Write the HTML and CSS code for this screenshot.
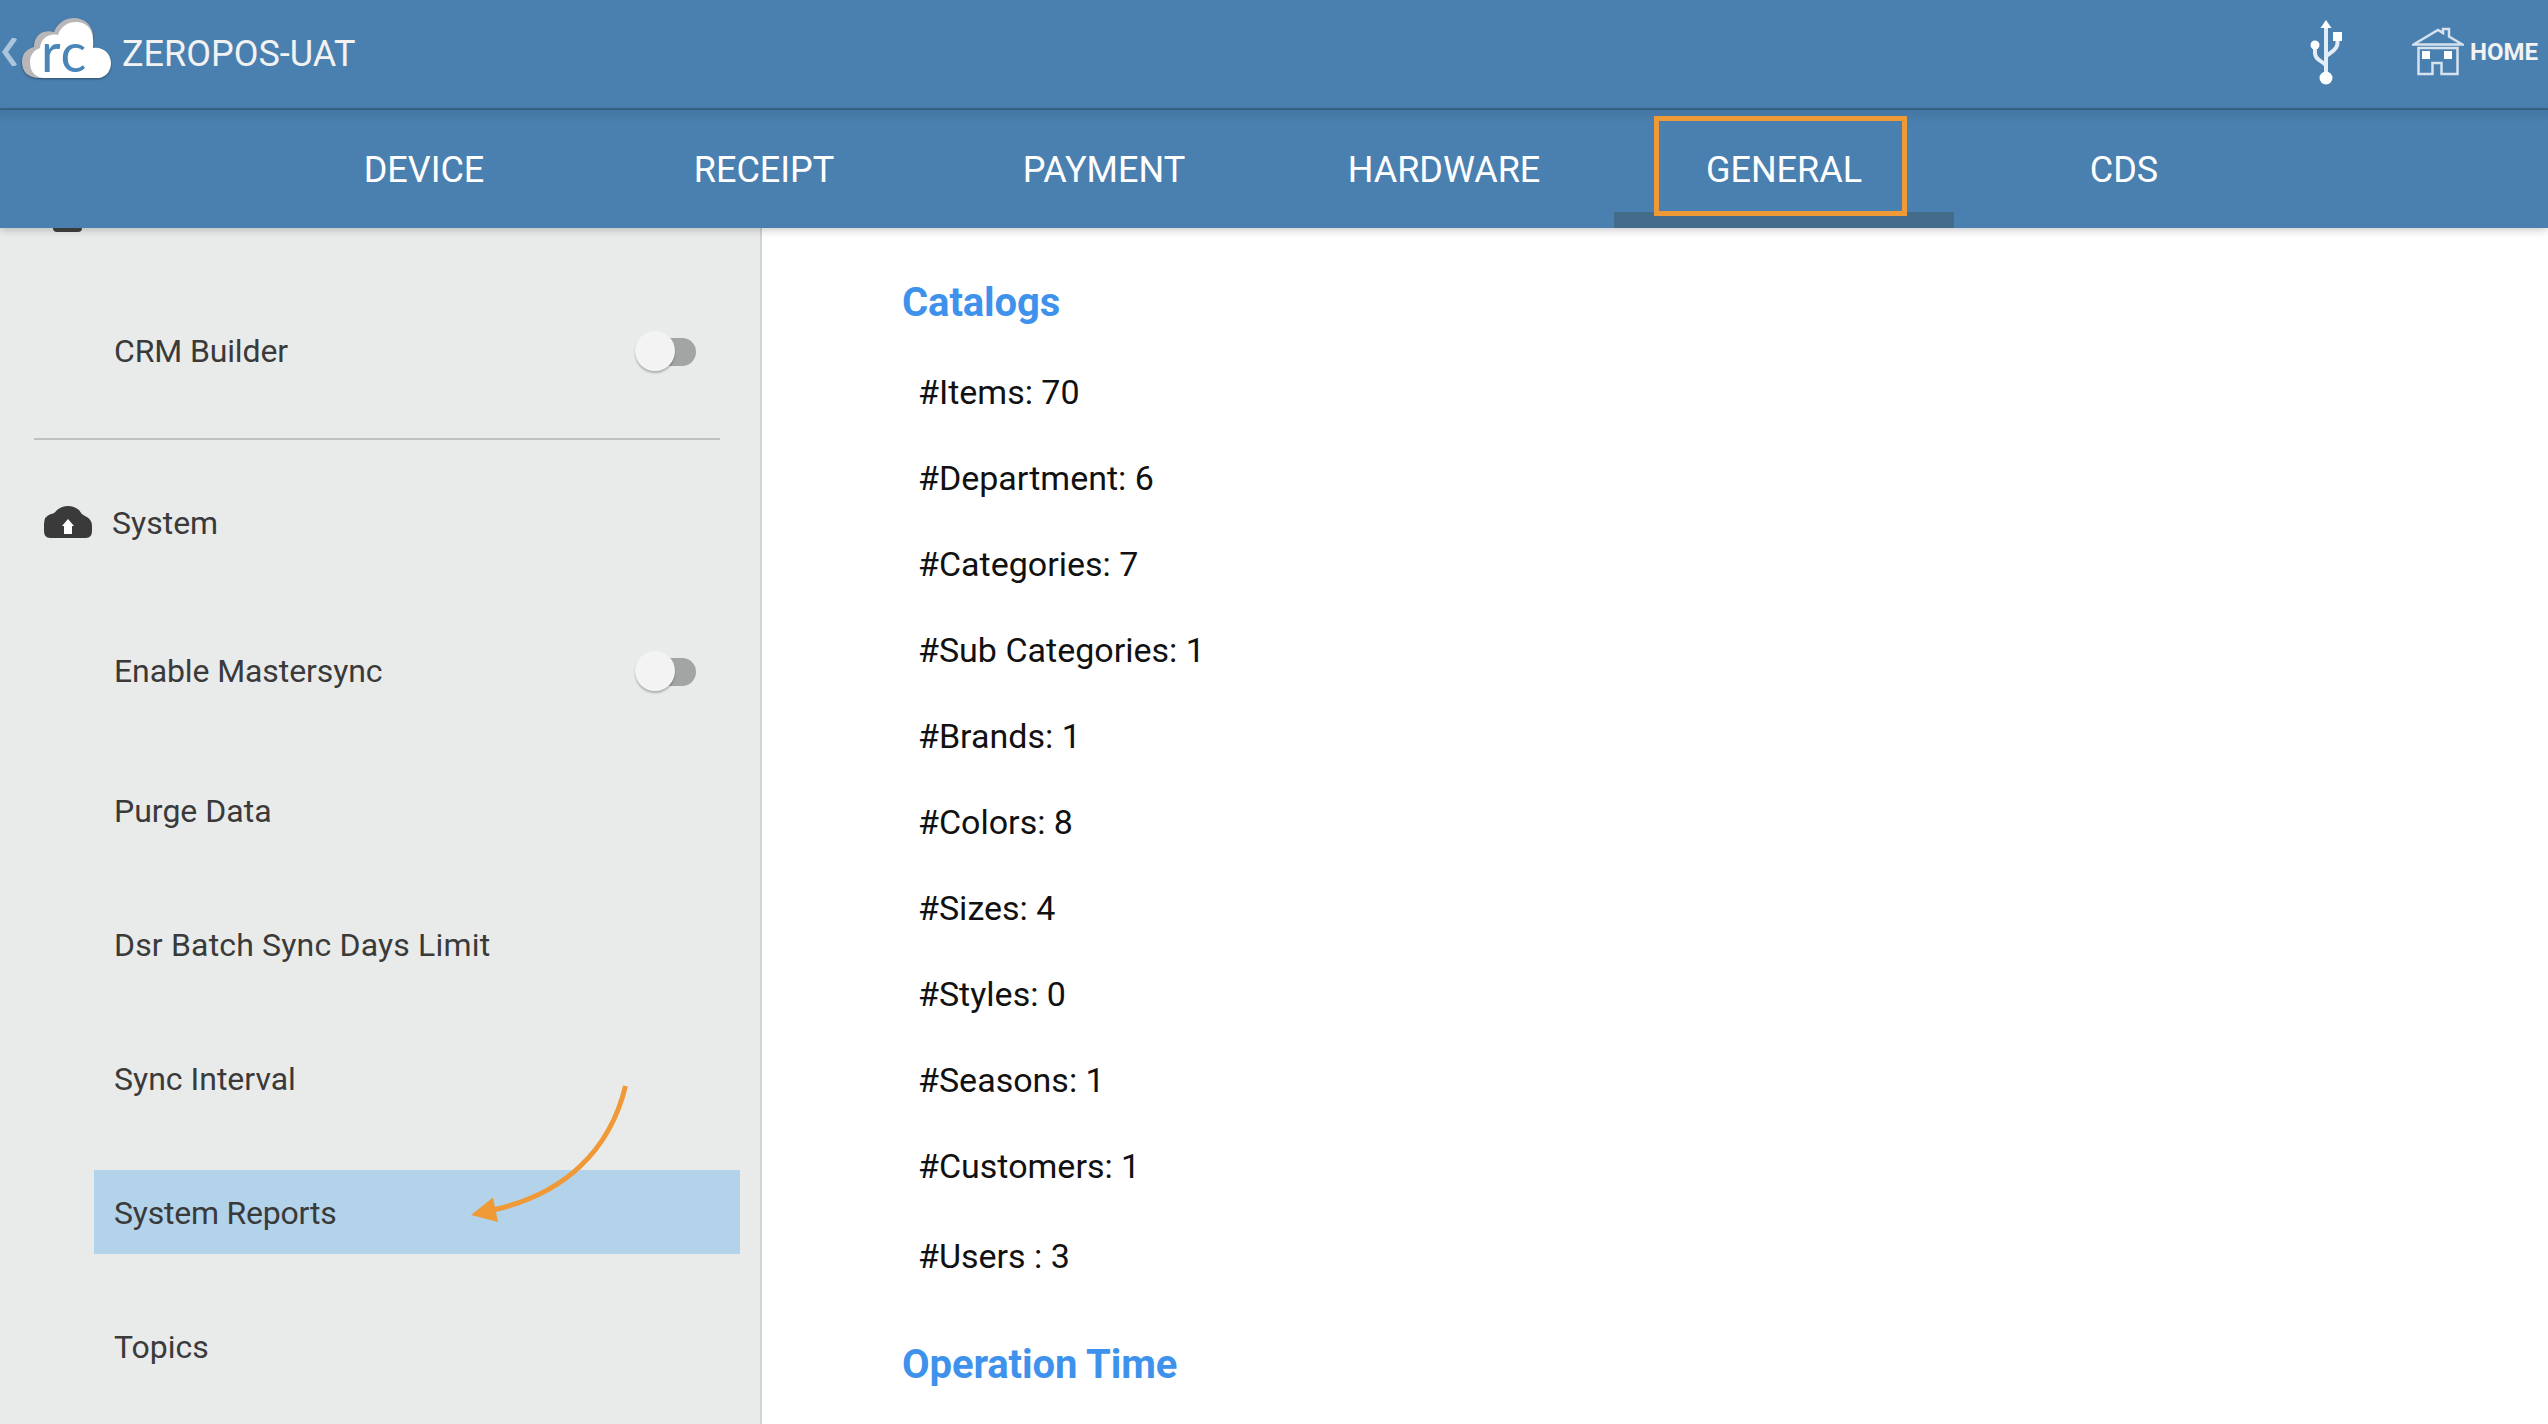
FILE: index.html
```html
<!DOCTYPE html>
<html lang="en">
<head>
  <meta charset="UTF-8" />
  <meta name="viewport" content="width=device-width, initial-scale=1.0" />
  <title>ZEROPOS-UAT</title>
  <link rel="stylesheet" href="styles.css">
</head>
<body>
  <header class="topbar">
    <svg class="back" width="16" height="28" viewBox="0 0 16 28"><path d="M14 0 L4 14 L14 28" /></svg>
    <div class="logo">
      <svg width="96" height="68" viewBox="0 0 96 68">
        <path class="cloud-back" d="M22 62 C9 62 4 55 4 46 C4 37 9 33 16 31 C16 19 25 13 36 16 C40 6 48 2 56 2 C67 2 75 10 75 20 L70 62 Z" />
        <path class="cloud-front" d="M25 62 C15 61 12 53 12 46 C12 39 16 34 22 32 C23 22 31 17 40 19 C43 10 50 6 58 6 C69 6 77 14 75 32 C84 30 93 37 93 47 C93 55 88 61 81 62 Z" />
      </svg>
      <span class="logo-text">rc</span>
    </div>
    <span class="title">ZEROPOS-UAT</span>
    <svg class="usb" width="34" height="68" viewBox="0 0 34 68">
      <path class="usb-line" d="M17 5 V56 M17 48 C17 42 6 43 6 34 V28 M17 39 C17 34 28.500 33 28.500 24 V19" />
      <path class="usb-fill" d="M11.500 9 L17 1 L22.500 9 Z" />
      <rect class="usb-fill" x="24" y="13" width="9" height="9" />
      <circle class="usb-fill" cx="6" cy="26" r="4.500" />
      <circle class="usb-fill" cx="17" cy="59" r="6.500" />
    </svg>
    <div class="home">
      <svg width="52" height="50" viewBox="0 0 52 50">
        <path class="house-line" d="M1.500 17.500 L26 3 L31 6 V2 H37 V9.500 L50.500 17.500 Z" />
        <path class="house-line" d="M6.500 21 H45.500 V47 H29.500 V36 H20.500 V47 H6.500 Z" />
        <rect class="usb-fill" x="10" y="24" width="8" height="8" />
        <rect class="usb-fill" x="32" y="24" width="8" height="8" />
      </svg>
      <span>HOME</span>
    </div>
  </header>

  <nav class="tabs">
    <a class="tab">DEVICE</a>
    <a class="tab">RECEIPT</a>
    <a class="tab">PAYMENT</a>
    <a class="tab">HARDWARE</a>
    <a class="tab active">GENERAL</a>
    <a class="tab">CDS</a>
  </nav>

  <main class="content">
    <aside class="sidebar">
      <div class="prev-icon"></div>
      <div class="row first">CRM Builder <span class="switch"></span></div>
      <hr class="divider">
      <div class="section">
        <svg width="48" height="32" viewBox="0 0 48 32">
          <path class="cloud" d="M6 32 Q0 32 0 25 V18 Q0 10 7 8 Q10 8 13 4 Q18 0 24 0 Q30 0 35 4 Q37 8 41 10 Q48 13 48 20 V25 Q48 32 42 32 Z" />
          <path class="cloud-arrow" d="M24 13 L30 20 H28 V28 H20 V20 H18 Z" />
        </svg>
        <span class="section-name">System</span>
      </div>
      <div class="row sync">Enable Mastersync <span class="switch"></span></div>
      <div class="row">Purge Data</div>
      <div class="row batch">Dsr Batch Sync Days Limit</div>
      <div class="row">Sync Interval</div>
      <div class="row selected">
        System Reports
        <svg class="arrow" width="164" height="144" viewBox="0 0 164 144">
          <path class="arrow-line" d="M157.500 2 C142 66 97 110 25 126" />
          <path class="arrow-head" d="M3 131 L25 113.500 L30 138 Z" />
        </svg>
      </div>
      <div class="row">Topics</div>
    </aside>

    <section class="report">
      <h2>Catalogs</h2>
      <ul>
        <li>#Items: 70</li>
        <li>#Department: 6</li>
        <li>#Categories: 7</li>
        <li>#Sub Categories: 1</li>
        <li>#Brands: 1</li>
        <li>#Colors: 8</li>
        <li>#Sizes: 4</li>
        <li>#Styles: 0</li>
        <li>#Seasons: 1</li>
        <li>#Customers: 1</li>
        <li class="users">#Users : 3</li>
      </ul>
      <h2>Operation Time</h2>
    </section>
  </main>
</body>
</html>
```
FILE: styles.css
```css
*,
*::before,
*::after {
  box-sizing: border-box;
}

body {
  margin: 0;
  height: 1424px;
  display: flex;
  flex-direction: column;
  overflow: hidden;
  font-family: Roboto, sans-serif;
  background: #fff;
}

.topbar {
  flex: none;
  height: 110px;
  display: flex;
  align-items: flex-start;
  background: #4a80b0;
  border-bottom: 2px solid #3a6489;
  color: #f2f2f2;
}

.back {
  margin: 38px 0 0 1px;
  fill: none;
  stroke: #a9c5dc;
  stroke-width: 5;
}

.logo {
  position: relative;
  width: 96px;
  height: 68px;
  margin: 16px 0 0 1px;
}

.logo svg {
  display: block;
  filter: drop-shadow(0 1px 1px rgba(0, 0, 0, 0.4));
}

.cloud-back {
  fill: #b9b6b8;
}

.cloud-front {
  fill: #fff;
}

.logo-text {
  position: absolute;
  left: 23px;
  top: 8px;
  font-family: Lato, sans-serif;
  font-size: 54px;
  line-height: 56px;
  letter-spacing: 1px;
  color: #4a86b8;
}

.title {
  margin: 32px 0 0 8px;
  font-size: 36px;
  line-height: 44px;
}

.usb {
  margin: 19px 0 0 auto;
}

.usb-line {
  fill: none;
  stroke: #e4edf5;
  stroke-width: 4;
}

.usb-fill {
  fill: #fff;
}

.home {
  display: flex;
  align-items: center;
  gap: 6px;
  margin: 27px 10px 0 69px;
  font-size: 24px;
  font-weight: 700;
}

.house-line {
  fill: none;
  stroke: #d5e2ee;
  stroke-width: 2.500;
}

.tabs {
  flex: none;
  height: 118px;
  padding-left: 254px;
  display: flex;
  background: linear-gradient(#4476a3, #4a80b0 14px);
  position: relative;
  z-index: 1;
  box-shadow: 0 2px 8px rgba(0, 0, 0, 0.22);
}

.tab {
  position: relative;
  width: 340px;
  height: 118px;
  font-size: 36px;
  line-height: 120px;
  text-align: center;
  color: #fff;
}

.tab.active {
  border-bottom: 16px solid #426c89;
}

/* orange frame round the current tab */
.tab.active::after {
  content: "";
  position: absolute;
  left: 40px;
  top: 6px;
  width: 253px;
  height: 100px;
  border: 5px solid #f09937;
}

.content {
  flex: 1;
  display: flex;
  min-height: 0;
}

.sidebar {
  width: 762px;
  border-right: 2px solid #d1d3d2;
  background: #e9ebea;
  font-size: 32px;
  color: #3a3a3a;
}

.prev-icon {
  width: 29px;
  height: 4px;
  margin-left: 53px;
  border-radius: 0 0 6px 6px;
  background: #3a3a3a;
  position: relative;
  z-index: 2;
}

.row {
  position: relative;
  display: flex;
  align-items: center;
  justify-content: space-between;
  height: 84px;
  margin: 0 20px 50px 94px;
  padding: 0 44px 0 20px;
}

.row.first {
  margin-top: 77px;
  margin-bottom: 45px;
  letter-spacing: -0.13px;
}

.divider {
  width: 686px;
  height: 2px;
  margin: 0 0 0 34px;
  border: none;
  background: #bfc1c0;
}

.section {
  display: flex;
  align-items: center;
  gap: 20px;
  height: 84px;
  margin: 40px 0 65px 44px;
}

.section-name {
  padding-top: 2px;
}

.cloud {
  fill: #3a3a3a;
}

.cloud-arrow {
  fill: #fff;
}

.row.sync {
  margin-bottom: 56px;
  letter-spacing: -0.1px;
}

.row.batch {
  letter-spacing: 0.17px;
}

.row.selected {
  margin-top: -1px;
  margin-bottom: 51px;
  padding-top: 2px;
  letter-spacing: -0.22px;
  background: #b3d3ea;
}

.switch {
  position: relative;
  width: 54px;
  height: 28px;
  margin-top: 2px;
  border-radius: 14px;
  background: #a3a4a4;
}

.switch::before {
  content: "";
  position: absolute;
  left: -7px;
  top: -7px;
  width: 40px;
  height: 40px;
  border-radius: 50%;
  background: #f3f3f3;
  box-shadow: 0 2px 2px rgba(0, 0, 0, 0.25);
}

.arrow {
  position: absolute;
  left: 374px;
  top: -86px;
}

.arrow-line {
  fill: none;
  stroke: #f09937;
  stroke-width: 5;
}

.arrow-head {
  fill: #f09937;
}

.report {
  flex: 1;
  padding: 51px 0 0 140px;
}

.report h2 {
  margin: 0;
  font-size: 40px;
  line-height: 48px;
  font-weight: 700;
  letter-spacing: -0.1px;
  color: #3f92ec;
}

.report ul {
  list-style: none;
  margin: 22px 0 42px;
  padding: 0 0 0 16px;
}

.report li {
  height: 86px;
  font-size: 34px;
  line-height: 86px;
  color: #111;
}

.report .users {
  margin-top: 4px;
}
```
